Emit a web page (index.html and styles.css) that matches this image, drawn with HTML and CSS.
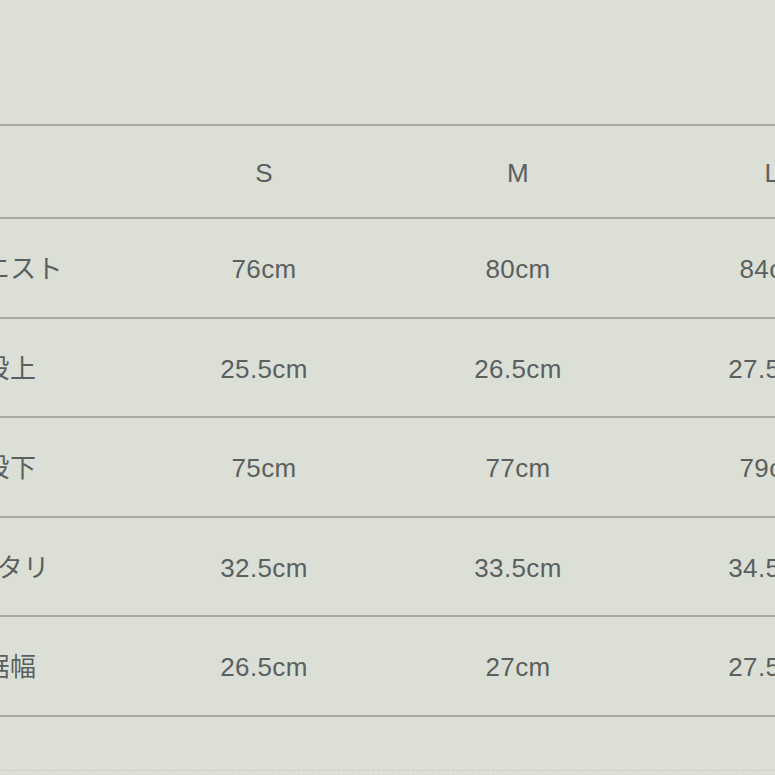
FILE: index.html
```html
<!DOCTYPE html>
<html lang="ja">
<head>
<meta charset="utf-8">
<title>サイズ表</title>
<link rel="stylesheet" href="styles.css">
</head>
<body>
<div class="sheet">
  <div class="row head">
    <div class="cell"></div>
    <div class="cell">S</div>
    <div class="cell">M</div>
    <div class="cell">L</div>
  </div>
  <div class="row">
    <div class="cell">ウエスト</div>
    <div class="cell">76cm</div>
    <div class="cell">80cm</div>
    <div class="cell">84cm</div>
  </div>
  <div class="row">
    <div class="cell">股上</div>
    <div class="cell">25.5cm</div>
    <div class="cell">26.5cm</div>
    <div class="cell">27.5cm</div>
  </div>
  <div class="row">
    <div class="cell">股下</div>
    <div class="cell">75cm</div>
    <div class="cell">77cm</div>
    <div class="cell">79cm</div>
  </div>
  <div class="row">
    <div class="cell">ワタリ</div>
    <div class="cell">32.5cm</div>
    <div class="cell">33.5cm</div>
    <div class="cell">34.5cm</div>
  </div>
  <div class="row last">
    <div class="cell">裾幅</div>
    <div class="cell">26.5cm</div>
    <div class="cell">27cm</div>
    <div class="cell">27.5cm</div>
  </div>
  <div class="fold"></div>
</div>
</body>
</html>
```

FILE: styles.css
```css
html, body {
  margin: 0;
  padding: 0;
  background: #dcdfd6;
  overflow: hidden;
}

body {
  width: 775px;
  height: 775px;
  font-family: "Liberation Sans", "Noto Sans CJK JP", sans-serif;
  color: #5a5f5f;
}

.sheet {
  margin-top: 124px;
  margin-left: -117px;
  width: 1016px;
}

.row {
  display: grid;
  grid-template-columns: repeat(4, 254px);
  box-sizing: border-box;
  height: 99.5px;
  border-top: 2px solid #a7aaa3;
}

.row.head {
  height: 93px;
}

.row.last {
  border-bottom: 2px solid #a7aaa3;
  height: 101.5px;
}

.cell {
  display: flex;
  align-items: center;
  justify-content: center;
  padding-top: 3px;
  font-size: 26px;
  line-height: 1;
  letter-spacing: 0.4px;
}

.fold {
  margin-top: 53px;
  border-top: 1px dashed #c8cbc3;
}
```
